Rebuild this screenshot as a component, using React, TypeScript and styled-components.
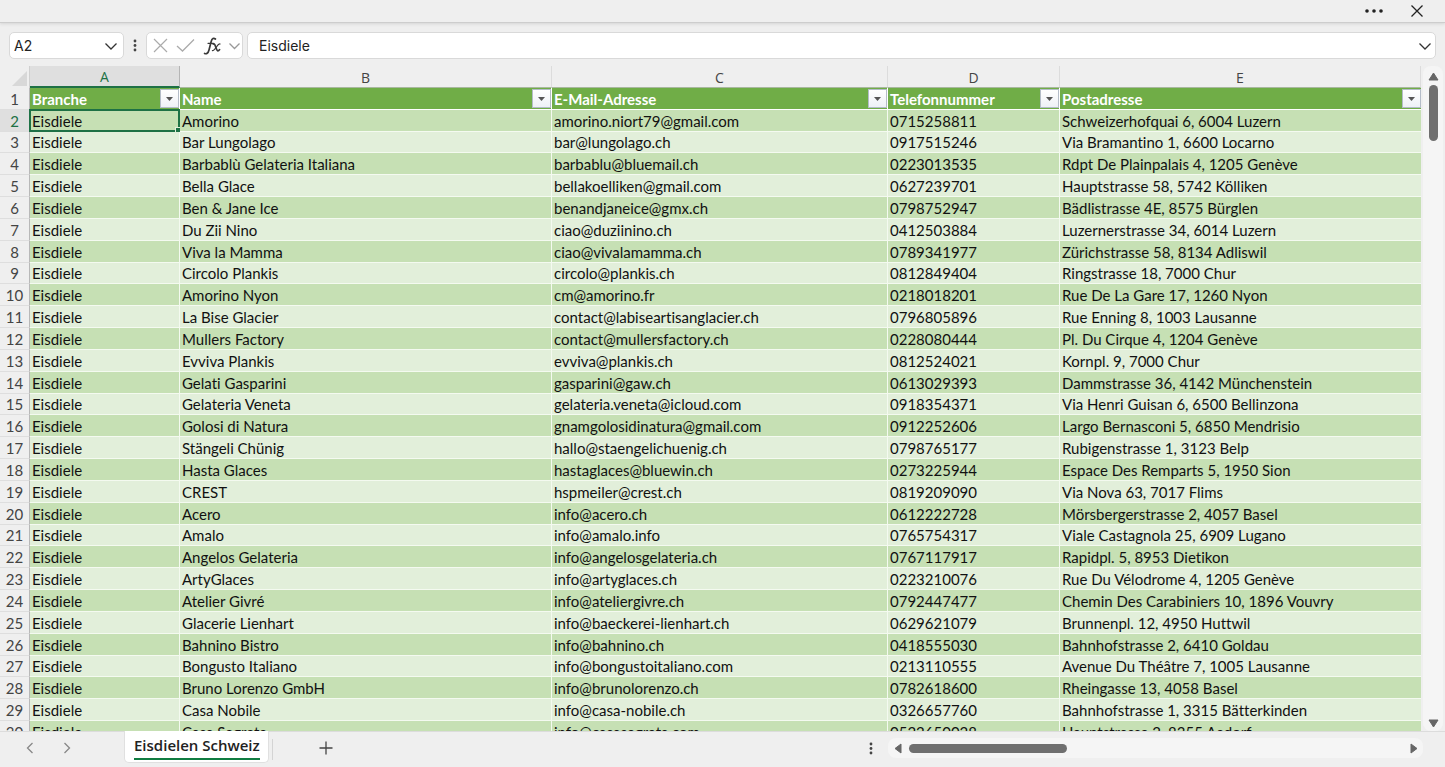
import React from "react";
import styled, { createGlobalStyle, css } from "styled-components";

const cellFont = `Lato, "Noto Sans", sans-serif`;
const uiFont = `"Open Sans", "Noto Sans", sans-serif`;

const GlobalStyle = createGlobalStyle`
  * { box-sizing: border-box; }
  body { margin: 0; background: #efefef; font-family: ${uiFont}; color: #222; }
  button, input { font: inherit; color: inherit; }
`;

const Page = styled.div`
  display: flex;
  flex-direction: column;
  height: 100vh;
  overflow: hidden;
`;

const IconButton = styled.button`
  display: flex;
  align-items: center;
  justify-content: center;
  flex: none;
  padding: 0;
  border: 0;
  background: none;
`;

const TitleBar = styled.header`
  display: flex;
  flex: none;
  align-items: center;
  justify-content: flex-end;
  gap: 27px;
  height: 23px;
  padding-right: 21px;
  border-bottom: 1px solid #cdcdcd;
  box-shadow: 0 1px 3px #d4d4d4;
`;

const FormulaBar = styled.div`
  display: flex;
  flex: none;
  align-items: center;
  height: 43px;
  padding: 2px 9px 0;
`;

const Field = styled.div`
  display: flex;
  align-items: center;
  height: 27px;
  border: 1px solid #d9d9d9;
  border-radius: 5px;
  background: #fff;
`;

const NameBox = styled(Field)`
  width: 115px;
  padding: 0 5px 0 4px;
`;

const FormulaTools = styled(Field)`
  gap: 8px;
  width: 97px;
  margin-right: 4px;
  padding: 0 0 0 6px;
`;

const FormulaField = styled(Field)`
  flex: 1;
  padding: 0 3px 0 11px;
`;

const TextInput = styled.input`
  flex: 1;
  min-width: 0;
  padding: 0;
  border: 0;
  outline: 0;
  background: none;
  font-family: Inter, sans-serif;
  font-size: 14px;
  line-height: 20px;
`;

const BarHandle = styled(IconButton)`
  width: 22px;
`;

const Workspace = styled.main`
  display: flex;
  flex: 1;
  min-height: 0;
`;

const SheetArea = styled.div`
  flex: 1;
  min-width: 0;
  overflow: hidden;
`;

const SheetTable = styled.table`
  width: 100%;
  table-layout: fixed;
  border-collapse: separate;
  border-spacing: 0;
  font-family: ${cellFont};
  font-size: 15px;
  font-variant-ligatures: none;
  line-height: 20px;
`;

const Col = styled.col<{ $width?: number }>`
  ${(p) => p.$width && `width: ${p.$width}px;`}
`;

const Corner = styled.td`
  height: 22px;
  padding: 0 2px 2px 0;
  border-right: 1px solid #d0d0d0;
  text-align: right;
  vertical-align: bottom;
  line-height: 0;
`;

const ColumnLetter = styled.th<{ $active?: boolean }>`
  height: 22px;
  padding: 2px 0 0;
  border-right: 1px solid #dcdcdc;
  border-bottom: 1px solid #a9b8a0;
  font-family: ${uiFont};
  font-size: 14px;
  font-weight: 400;
  line-height: 19px;
  color: #444;
  ${(p) =>
    p.$active &&
    css`
      border-right-color: #b5b5b5;
      border-bottom: 2px solid #1e7145;
      background: #dfdfdf;
      color: #1e7145;
      line-height: 18px;
    `}
`;

const RowNumber = styled.th<{ $active?: boolean }>`
  padding: 0;
  border-right: 1px solid #b8b8b8;
  border-bottom: 1px solid #dedede;
  font-weight: 400;
  color: #444;
  ${(p) =>
    p.$active &&
    css`
      border-right-color: #1e7145;
      background: #dfdfdf;
      color: #1e7145;
    `}
`;

const HeaderCell = styled.th`
  padding: 0;
  border-right: 1px solid #fff;
  border-bottom: 1px solid #fff;
  background: #70ad47;
  color: #fff;
  font-weight: 700;
  text-align: left;

  &:last-child {
    border-right: 0;
  }
`;

const HeaderContent = styled.div`
  display: flex;
  align-items: center;
  justify-content: space-between;
  padding-left: 2px;
`;

const FilterButton = styled(IconButton)`
  width: 19px;
  height: 19px;
  border: 1px solid #b4bcc8;
  background: linear-gradient(#fff, #eef1f6);
`;

const Cell = styled.td`
  position: relative;
  padding: 0 0 0 2px;
  border-right: 1px solid #f4faf0;
  border-bottom: 1px solid #f4faf0;
  color: #111;
  white-space: nowrap;

  &:last-child {
    border-right: 0;
  }
`;

const Selection = styled.span`
  position: absolute;
  inset: -1px;
  border: 2px solid #1e7145;
  pointer-events: none;

  &::after {
    content: "";
    position: absolute;
    right: -3px;
    bottom: -3px;
    width: 5px;
    height: 5px;
    background: #1e7145;
    outline: 1px solid #e2efda;
  }
`;

const Row = styled.tr`
  height: 22px;

  &:nth-child(6n + 3) {
    height: 21px;
    line-height: 19px;
  }
  &:nth-child(even) ${Cell} {
    background: #c6e0b4;
  }
  &:nth-child(odd) ${Cell} {
    background: #e2efda;
  }
`;

const VerticalScroll = styled.div`
  display: flex;
  flex: none;
  flex-direction: column;
  align-items: center;
  gap: 3px;
  width: 20px;
  margin: 0 2px;
  padding: 5px 0 2px;
  border-radius: 8px;
  background: #f5f5f5;
`;

const VerticalTrack = styled.div`
  flex: 1;
`;

const VerticalThumb = styled.div`
  width: 9px;
  height: 56px;
  border-radius: 5px;
  background: #6f6f6f;
`;

const Footer = styled.footer`
  display: flex;
  flex: none;
  align-items: flex-start;
  height: 36px;
  border-top: 1px solid #dcdcdc;
`;

const SheetNav = styled.nav`
  display: flex;
  align-items: center;
  gap: 21px;
  width: 124px;
  height: 32px;
  padding-left: 22px;
`;

const SheetTab = styled.button`
  height: 32px;
  margin-top: -1px;
  padding: 2px 8px 3px 9px;
  border: 1px solid #e0e0e0;
  border-top: 0;
  border-radius: 0 0 5px 5px;
  background: #fff;
  font-size: 15px;
  font-weight: 600;
  line-height: 25px;
`;

const TabLabel = styled.span`
  display: block;
  border-bottom: 2px solid #107c41;
`;

const TabDivider = styled.span`
  width: 1px;
  height: 21px;
  margin: 7px 45px 0 3px;
  background: #d4d4d4;
`;

const FooterButton = styled(IconButton)`
  width: 16px;
  height: 32px;
`;

const FooterSpace = styled.div`
  flex: 1;
`;

const HorizontalScroll = styled.div`
  display: flex;
  align-items: center;
  gap: 5px;
  width: 37%;
  height: 20px;
  margin: 6px 22px 0 9px;
  padding: 0 4px 0 5px;
  border-radius: 8px;
  background: #f5f5f5;
`;

const HorizontalTrack = styled.div`
  flex: 1;
`;

const HorizontalThumb = styled.div`
  width: 32%;
  height: 9px;
  border-radius: 5px;
  background: #6f6f6f;
`;

type ChevronDirection = "down" | "left" | "right";

const chevrons: Record<ChevronDirection, string> = {
  down: "M1.5 4.5 L7 10 L12.5 4.5",
  left: "M9.5 2 L4.5 7 L9.5 12",
  right: "M4.5 2 L9.5 7 L4.5 12",
};

function Chevron({ direction, color }: { direction: ChevronDirection; color: string }) {
  return (
    <svg width="14" height="14" viewBox="0 0 14 14" fill="none" stroke={color} strokeWidth="1.3">
      <path d={chevrons[direction]} />
    </svg>
  );
}

type ArrowDirection = "up" | "down" | "left" | "right";

const arrows: Record<ArrowDirection, string> = {
  up: "M5.5 2 L10 9 H1 Z",
  down: "M5.5 9 L10 2 H1 Z",
  left: "M2 5.5 L8 1 V10 Z",
  right: "M9 5.5 L3 1 V10 Z",
};

function Arrow({ direction }: { direction: ArrowDirection }) {
  return (
    <svg width="11" height="11" viewBox="0 0 11 11" fill="#666" stroke="#666" strokeLinejoin="round">
      <path d={arrows[direction]} />
    </svg>
  );
}

function VerticalDots() {
  return (
    <svg width="4" height="13" viewBox="0 0 4 13" fill="#444">
      <circle cx="2" cy="2" r="1.4" />
      <circle cx="2" cy="6.5" r="1.4" />
      <circle cx="2" cy="11" r="1.4" />
    </svg>
  );
}

const columns = [
  { letter: "A", title: "Branche", width: 150 },
  { letter: "B", title: "Name", width: 372 },
  { letter: "C", title: "E-Mail-Adresse", width: 336 },
  { letter: "D", title: "Telefonnummer", width: 172 },
  { letter: "E", title: "Postadresse" },
];

const entries = [
  ["Amorino", "amorino.niort79@gmail.com", "0715258811", "Schweizerhofquai 6, 6004 Luzern"],
  ["Bar Lungolago", "bar@lungolago.ch", "0917515246", "Via Bramantino 1, 6600 Locarno"],
  ["Barbablù Gelateria Italiana", "barbablu@bluemail.ch", "0223013535", "Rdpt De Plainpalais 4, 1205 Genève"],
  ["Bella Glace", "bellakoelliken@gmail.com", "0627239701", "Hauptstrasse 58, 5742 Kölliken"],
  ["Ben & Jane Ice", "benandjaneice@gmx.ch", "0798752947", "Bädlistrasse 4E, 8575 Bürglen"],
  ["Du Zii Nino", "ciao@duziinino.ch", "0412503884", "Luzernerstrasse 34, 6014 Luzern"],
  ["Viva la Mamma", "ciao@vivalamamma.ch", "0789341977", "Zürichstrasse 58, 8134 Adliswil"],
  ["Circolo Plankis", "circolo@plankis.ch", "0812849404", "Ringstrasse 18, 7000 Chur"],
  ["Amorino Nyon", "cm@amorino.fr", "0218018201", "Rue De La Gare 17, 1260 Nyon"],
  ["La Bise Glacier", "contact@labiseartisanglacier.ch", "0796805896", "Rue Enning 8, 1003 Lausanne"],
  ["Mullers Factory", "contact@mullersfactory.ch", "0228080444", "Pl. Du Cirque 4, 1204 Genève"],
  ["Evviva Plankis", "evviva@plankis.ch", "0812524021", "Kornpl. 9, 7000 Chur"],
  ["Gelati Gasparini", "gasparini@gaw.ch", "0613029393", "Dammstrasse 36, 4142 Münchenstein"],
  ["Gelateria Veneta", "gelateria.veneta@icloud.com", "0918354371", "Via Henri Guisan 6, 6500 Bellinzona"],
  ["Golosi di Natura", "gnamgolosidinatura@gmail.com", "0912252606", "Largo Bernasconi 5, 6850 Mendrisio"],
  ["Stängeli Chünig", "hallo@staengelichuenig.ch", "0798765177", "Rubigenstrasse 1, 3123 Belp"],
  ["Hasta Glaces", "hastaglaces@bluewin.ch", "0273225944", "Espace Des Remparts 5, 1950 Sion"],
  ["CREST", "hspmeiler@crest.ch", "0819209090", "Via Nova 63, 7017 Flims"],
  ["Acero", "info@acero.ch", "0612222728", "Mörsbergerstrasse 2, 4057 Basel"],
  ["Amalo", "info@amalo.info", "0765754317", "Viale Castagnola 25, 6909 Lugano"],
  ["Angelos Gelateria", "info@angelosgelateria.ch", "0767117917", "Rapidpl. 5, 8953 Dietikon"],
  ["ArtyGlaces", "info@artyglaces.ch", "0223210076", "Rue Du Vélodrome 4, 1205 Genève"],
  ["Atelier Givré", "info@ateliergivre.ch", "0792447477", "Chemin Des Carabiniers 10, 1896 Vouvry"],
  ["Glacerie Lienhart", "info@baeckerei-lienhart.ch", "0629621079", "Brunnenpl. 12, 4950 Huttwil"],
  ["Bahnino Bistro", "info@bahnino.ch", "0418555030", "Bahnhofstrasse 2, 6410 Goldau"],
  ["Bongusto Italiano", "info@bongustoitaliano.com", "0213110555", "Avenue Du Théâtre 7, 1005 Lausanne"],
  ["Bruno Lorenzo GmbH", "info@brunolorenzo.ch", "0782618600", "Rheingasse 13, 4058 Basel"],
  ["Casa Nobile", "info@casa-nobile.ch", "0326657760", "Bahnhofstrasse 1, 3315 Bätterkinden"],
  ["Casa Segreta", "info@casasegreta.com", "0522650028", "Hauptstrasse 2, 8355 Aadorf"],
];

export default function App() {
  return (
    <Page>
      <GlobalStyle />
      <TitleBar>
        <IconButton aria-label="Weitere Optionen">
          <svg width="18" height="12" viewBox="0 0 18 12" fill="#222">
            <circle cx="2" cy="6" r="1.8" />
            <circle cx="9" cy="6" r="1.8" />
            <circle cx="16" cy="6" r="1.8" />
          </svg>
        </IconButton>
        <IconButton aria-label="Schliessen">
          <svg width="14" height="14" viewBox="0 0 14 14" stroke="#222" strokeWidth="1.3">
            <path d="M1.5 1.5 L12.5 12.5 M12.5 1.5 L1.5 12.5" />
          </svg>
        </IconButton>
      </TitleBar>

      <FormulaBar>
        <NameBox>
          <TextInput aria-label="Namenfeld" defaultValue="A2" />
          <IconButton aria-label="Namen anzeigen">
            <Chevron direction="down" color="#333" />
          </IconButton>
        </NameBox>
        <BarHandle aria-label="Grösse ändern">
          <VerticalDots />
        </BarHandle>
        <FormulaTools>
          <IconButton aria-label="Abbrechen">
            <svg width="15" height="15" viewBox="0 0 15 15" stroke="#ababab" strokeWidth="1.2">
              <path d="M1 1 L14 14 M14 1 L1 14" />
            </svg>
          </IconButton>
          <IconButton aria-label="Eingeben">
            <svg width="19" height="15" viewBox="0 0 19 15" fill="none" stroke="#ababab" strokeWidth="1.3">
              <path d="M1 8 L6.5 13 L18 1.5" />
            </svg>
          </IconButton>
          <IconButton aria-label="Funktion einfügen">
            <svg width="18" height="18" viewBox="0 0 18 18" fill="none" stroke="#3a3a3a" strokeLinecap="round">
              <path d="M12.4 2 C10.8 0.6 9 1.2 8.2 4.5 L6 13 C5.2 16.2 3.4 17.4 1.6 16.4" strokeWidth="1.7" />
              <path d="M5 6.3 H10.5" strokeWidth="1.2" />
              <path d="M10.2 7 C12.6 5.6 12.8 13.6 14.8 13.8 C15.6 13.8 16.2 13.2 16.6 12.6" strokeWidth="1.7" />
              <path d="M17 7 C14.8 5.8 12.2 13.8 9.4 13.6" strokeWidth="1.2" />
            </svg>
          </IconButton>
          <IconButton aria-label="Funktionsliste">
            <svg width="12" height="14" viewBox="0 0 12 14" fill="none" stroke="#999" strokeWidth="1.3">
              <path d="M0.5 4.5 L5.5 9.5 L10.5 4.5" />
            </svg>
          </IconButton>
        </FormulaTools>
        <FormulaField>
          <TextInput aria-label="Bearbeitungsleiste" defaultValue="Eisdiele" />
          <IconButton aria-label="Bearbeitungsleiste erweitern">
            <Chevron direction="down" color="#333" />
          </IconButton>
        </FormulaField>
      </FormulaBar>

      <Workspace>
        <SheetArea>
          <SheetTable>
            <colgroup>
              <Col $width={30} />
              {columns.map((c) => (
                <Col key={c.letter} $width={c.width} />
              ))}
            </colgroup>
            <thead>
              <tr>
                <Corner>
                  <svg width="15" height="15" viewBox="0 0 15 15" fill="#d8d8d8">
                    <path d="M15 0 V15 H0 Z" />
                  </svg>
                </Corner>
                {columns.map((c) => (
                  <ColumnLetter key={c.letter} scope="col" $active={c.letter === "A"}>
                    {c.letter}
                  </ColumnLetter>
                ))}
              </tr>
            </thead>
            <tbody>
              <Row>
                <RowNumber scope="row">1</RowNumber>
                {columns.map((c) => (
                  <HeaderCell key={c.letter} scope="col">
                    <HeaderContent>
                      {c.title}
                      <FilterButton aria-label={`${c.title} filtern`}>
                        <svg width="7" height="4" viewBox="0 0 7 4" fill="#555">
                          <path d="M0 0 H7 L3.5 4 Z" />
                        </svg>
                      </FilterButton>
                    </HeaderContent>
                  </HeaderCell>
                ))}
              </Row>
              {entries.map((entry, i) => (
                <Row key={entry[1]}>
                  <RowNumber scope="row" $active={i === 0}>
                    {i + 2}
                  </RowNumber>
                  <Cell>
                    Eisdiele
                    {i === 0 && <Selection />}
                  </Cell>
                  {entry.map((text) => (
                    <Cell key={text}>{text}</Cell>
                  ))}
                </Row>
              ))}
            </tbody>
          </SheetTable>
        </SheetArea>
        <VerticalScroll>
          <IconButton aria-label="Nach oben">
            <Arrow direction="up" />
          </IconButton>
          <VerticalTrack>
            <VerticalThumb />
          </VerticalTrack>
          <IconButton aria-label="Nach unten">
            <Arrow direction="down" />
          </IconButton>
        </VerticalScroll>
      </Workspace>

      <Footer>
        <SheetNav aria-label="Blattnavigation">
          <FooterButton aria-label="Vorheriges Blatt">
            <Chevron direction="left" color="#888" />
          </FooterButton>
          <FooterButton aria-label="Nächstes Blatt">
            <Chevron direction="right" color="#888" />
          </FooterButton>
        </SheetNav>
        <SheetTab>
          <TabLabel>Eisdielen Schweiz</TabLabel>
        </SheetTab>
        <TabDivider />
        <FooterButton aria-label="Neues Blatt">
          <svg width="14" height="14" viewBox="0 0 14 14" stroke="#444" strokeWidth="1.3">
            <path d="M7 0.5 V13.5 M0.5 7 H13.5" />
          </svg>
        </FooterButton>
        <FooterSpace />
        <FooterButton aria-label="Leiste anpassen">
          <VerticalDots />
        </FooterButton>
        <HorizontalScroll>
          <IconButton aria-label="Nach links">
            <Arrow direction="left" />
          </IconButton>
          <HorizontalTrack>
            <HorizontalThumb />
          </HorizontalTrack>
          <IconButton aria-label="Nach rechts">
            <Arrow direction="right" />
          </IconButton>
        </HorizontalScroll>
      </Footer>
    </Page>
  );
}
